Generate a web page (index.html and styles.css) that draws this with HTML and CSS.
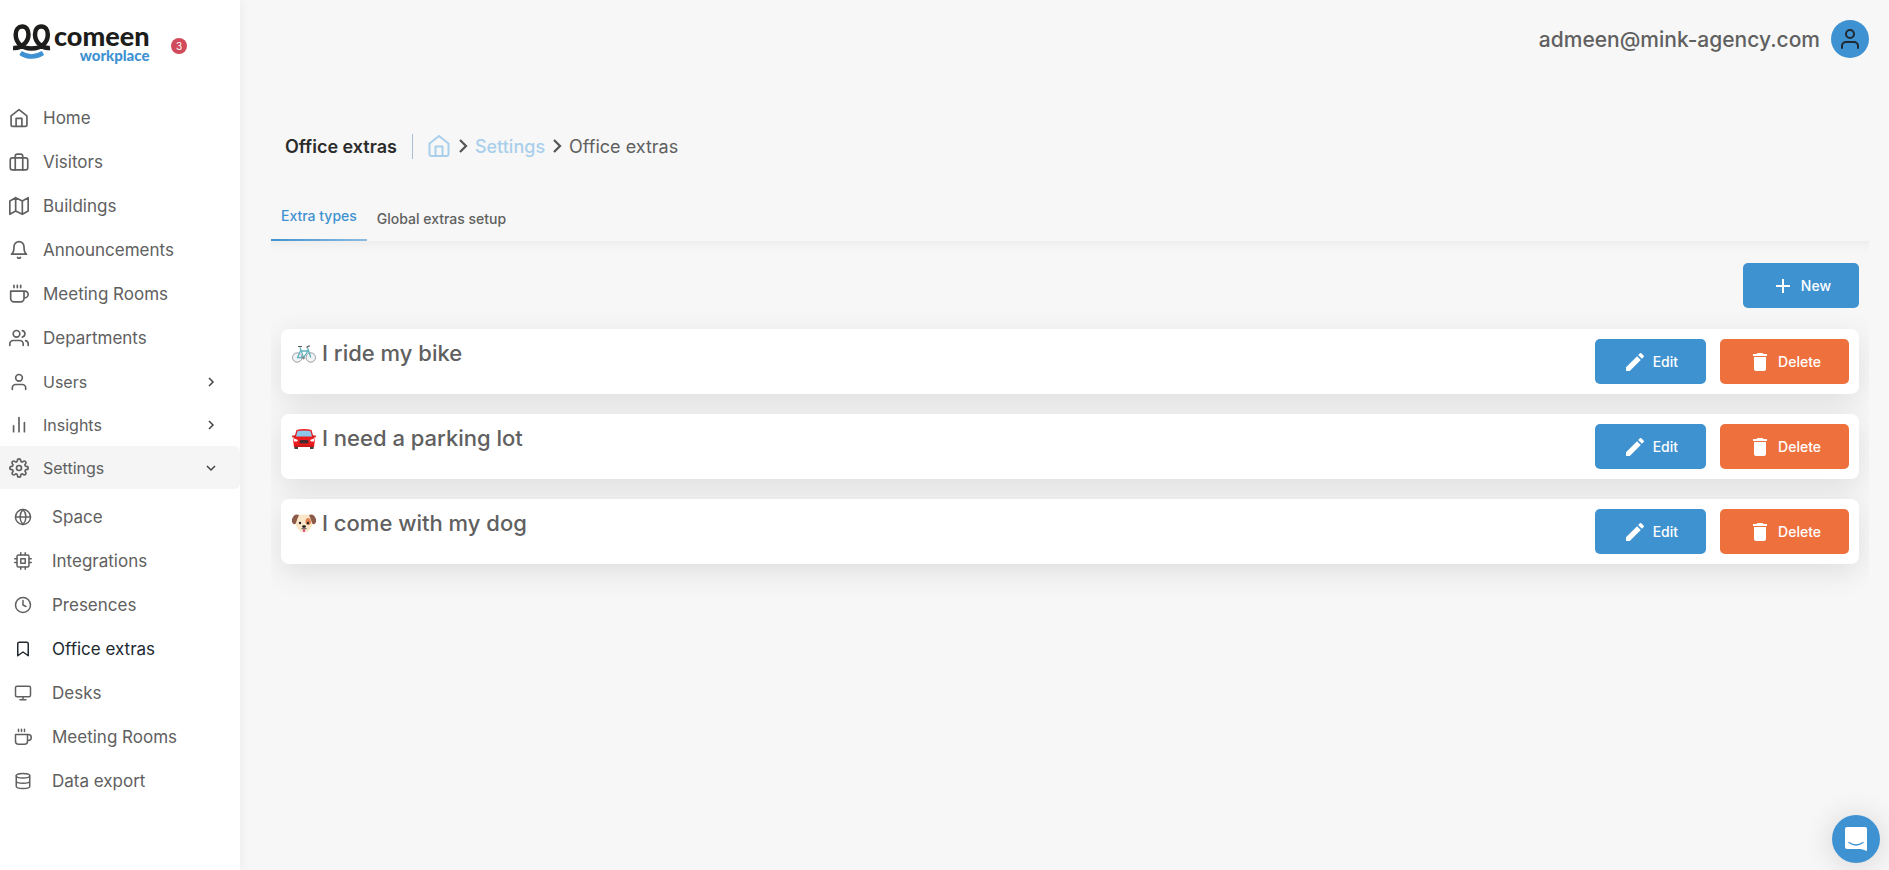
FILE: index.html
```html
<!DOCTYPE html>
<html lang="en">
<head>
<meta charset="utf-8">
<title>Office extras</title>
<link rel="stylesheet" href="styles.css">
</head>
<body>
<svg class="sprite" aria-hidden="true">
  <symbol id="home" viewBox="0 0 24 24"><path d="M2.500 9.500 12 2l9.500 7.500V20a2 2 0 0 1-2 2h-15a2 2 0 0 1-2-2z"/><path d="M8.500 22V12.500h7V22"/></symbol>
  <symbol id="case" viewBox="0 0 24 24"><rect x="1.500" y="7" width="21" height="14.500" rx="2.500"/><path d="M7.500 21.500V5a2.500 2.500 0 0 1 2.500-2.500h4A2.500 2.500 0 0 1 16.500 5v16.500"/></symbol>
  <symbol id="map" viewBox="0 0 24 24"><path d="M1 6v16l7-4 8 4 7-4V2l-7 4-8-4zM8 2v16M16 6v16"/></symbol>
  <symbol id="bell" viewBox="0 0 24 24"><path d="M18 8A6 6 0 0 0 6 8c0 7-3 9-3 9h18s-3-2-3-9M13.700 21a2 2 0 0 1-3.400 0"/></symbol>
  <symbol id="coffee" viewBox="0 0 24 24"><path d="M18 8.500h1a4 4 0 0 1 0 8h-1M2 8.500h16v9a4 4 0 0 1-4 4H6a4 4 0 0 1-4-4zM6 1.500v3M10 1.500v3M14 1.500v3"/></symbol>
  <symbol id="people" viewBox="0 0 24 24"><path d="M17 21v-2a4 4 0 0 0-4-4H5a4 4 0 0 0-4 4v2M23 21v-2a4 4 0 0 0-3-3.900M16 3.100a4 4 0 0 1 0 7.800"/><circle cx="9" cy="7" r="4"/></symbol>
  <symbol id="user" viewBox="0 0 24 24"><path d="M20 21v-2a4 4 0 0 0-4-4H8a4 4 0 0 0-4 4v2"/><circle cx="12" cy="7" r="4"/></symbol>
  <symbol id="bars" viewBox="0 0 24 24"><path d="M18.500 20V9M12 20V3M5.500 20v-7"/></symbol>
  <symbol id="gear" viewBox="0 0 24 24"><circle cx="12" cy="12" r="3"/><path d="M19.400 15a1.650 1.650 0 0 0 .33 1.820l.06.06a2 2 0 1 1-2.830 2.830l-.06-.06a1.650 1.650 0 0 0-2.800 1.170V21a2 2 0 1 1-4 0v-.09a1.650 1.650 0 0 0-2.900-1.180l-.06.06a2 2 0 1 1-2.830-2.830l.06-.06A1.650 1.650 0 0 0 3.090 14H3a2 2 0 1 1 0-4h.09a1.650 1.650 0 0 0 1.180-2.900l-.06-.06a2 2 0 1 1 2.830-2.830l.06.06A1.650 1.650 0 0 0 10 3.090V3a2 2 0 1 1 4 0v.09a1.650 1.650 0 0 0 2.820 1.180l.06-.06a2 2 0 1 1 2.830 2.830l-.06.06A1.650 1.650 0 0 0 20.910 10H21a2 2 0 1 1 0 4h-.09a1.650 1.650 0 0 0-1.510 1z"/></symbol>
  <symbol id="globe" viewBox="0 0 24 24"><circle cx="12" cy="12" r="10"/><path d="M2 12h20M12 2a15.300 15.300 0 0 1 4 10 15.300 15.300 0 0 1-4 10 15.300 15.300 0 0 1-4-10 15.300 15.300 0 0 1 4-10z"/></symbol>
  <symbol id="chip" viewBox="0 0 24 24"><rect x="4" y="4" width="16" height="16" rx="2"/><path d="M9 9h6v6H9zM9 1v3M15 1v3M9 20v3M15 20v3M20 9h3M20 14h3M1 9h3M1 14h3"/></symbol>
  <symbol id="clock" viewBox="0 0 24 24"><circle cx="12" cy="12" r="10"/><path d="M12 6v6l4 2"/></symbol>
  <symbol id="bookmark" viewBox="0 0 24 24"><path d="m19 21-7-5-7 5V5a2 2 0 0 1 2-2h10a2 2 0 0 1 2 2z"/></symbol>
  <symbol id="monitor" viewBox="0 0 24 24"><rect x="2" y="3" width="20" height="14" rx="2"/><path d="M8 21h8M12 17v4"/></symbol>
  <symbol id="data" viewBox="0 0 24 24"><ellipse cx="12" cy="5" rx="9" ry="3"/><path d="M21 12c0 1.660-4 3-9 3s-9-1.340-9-3M3 5v14c0 1.660 4 3 9 3s9-1.340 9-3V5"/></symbol>
  <symbol id="chev" viewBox="0 0 24 24"><path d="m8 4 8 8-8 8"/></symbol>
  <symbol id="pencil" viewBox="0 0 24 24"><path d="M3 17.250V21h3.750L17.810 9.940l-3.750-3.750zM20.710 7.040a1 1 0 0 0 0-1.410l-2.340-2.340a1 1 0 0 0-1.410 0l-1.830 1.830 3.750 3.750z"/></symbol>
  <symbol id="trash" viewBox="0 0 24 24"><path d="M6 19c0 1.100.9 2 2 2h8c1.100 0 2-.9 2-2V7H6zM19 4h-3.500l-1-1h-5l-1 1H5v2h14z"/></symbol>
  <symbol id="plus" viewBox="0 0 24 24"><path d="M19 13h-6v6h-2v-6H5v-2h6V5h2v6h6z"/></symbol>
</svg>
<div class="app">
  <aside class="sidebar">
    <div class="brand">
      <a class="logo" href="#" aria-label="comeen workplace">
        <svg class="logo-mark" viewBox="0 0 38 36" aria-hidden="true">
          <path d="M0 24C8 25 15.500 18 15.500 10.500C15.500 5.500 13 2.500 9.200 2.500S2.700 5.500 2.700 10.500C2.700 18 8 24.500 18.500 24.500S34.800 18 34.800 10.500C34.800 5.500 32.300 2.500 28.300 2.500S22 5.500 22 10.500C22 18 29 25 37 24" fill="none" stroke="#1d1d1b" stroke-width="4.500"/>
          <path d="M7.500 29c7 4.500 15 4.500 22.500 0" fill="none" stroke="#3f92d2" stroke-width="4.500"/>
        </svg>
        <span class="logo-text"><span class="logo-name">comeen</span><span class="logo-sub">workplace</span></span>
      </a>
      <span class="badge">3</span>
    </div>
    <nav class="nav">
      <a class="item" href="#"><svg class="icon"><use href="#home"/></svg>Home</a>
      <a class="item" href="#"><svg class="icon"><use href="#case"/></svg>Visitors</a>
      <a class="item" href="#"><svg class="icon"><use href="#map"/></svg>Buildings</a>
      <a class="item" href="#"><svg class="icon"><use href="#bell"/></svg>Announcements</a>
      <a class="item" href="#"><svg class="icon"><use href="#coffee"/></svg>Meeting Rooms</a>
      <a class="item" href="#"><svg class="icon"><use href="#people"/></svg>Departments</a>
      <button class="item group" type="button"><svg class="icon"><use href="#user"/></svg>Users<svg class="arrow"><use href="#chev"/></svg></button>
      <button class="item group" type="button"><svg class="icon"><use href="#bars"/></svg>Insights<svg class="arrow"><use href="#chev"/></svg></button>
      <button class="item group open" type="button" aria-expanded="true"><svg class="icon"><use href="#gear"/></svg>Settings<svg class="arrow"><use href="#chev"/></svg></button>
      <div class="subnav">
        <a class="item" href="#"><svg class="icon"><use href="#globe"/></svg>Space</a>
        <a class="item" href="#"><svg class="icon"><use href="#chip"/></svg>Integrations</a>
        <a class="item" href="#"><svg class="icon"><use href="#clock"/></svg>Presences</a>
        <a class="item current" href="#" aria-current="page"><svg class="icon"><use href="#bookmark"/></svg>Office extras</a>
        <a class="item" href="#"><svg class="icon"><use href="#monitor"/></svg>Desks</a>
        <a class="item" href="#"><svg class="icon"><use href="#coffee"/></svg>Meeting Rooms</a>
        <a class="item" href="#"><svg class="icon"><use href="#data"/></svg>Data export</a>
      </div>
    </nav>
  </aside>
  <main class="main">
    <header class="topbar">
      <span class="email">admeen@mink-agency.com</span>
      <button class="avatar" type="button" aria-label="Account"><svg class="icon"><use href="#user"/></svg></button>
    </header>
    <div class="crumbs">
      <h1 class="title">Office extras</h1>
      <nav class="trail" aria-label="Breadcrumb">
        <a class="trail-home" href="#" aria-label="Home"><svg class="icon"><use href="#home"/></svg></a>
        <svg class="sep"><use href="#chev"/></svg>
        <a class="trail-link" href="#">Settings</a>
        <svg class="sep"><use href="#chev"/></svg>
        <span>Office extras</span>
      </nav>
    </div>
    <div class="tabs" role="tablist">
      <button class="tab active" type="button" role="tab" aria-selected="true">Extra types</button>
      <button class="tab" type="button" role="tab" aria-selected="false">Global extras setup</button>
    </div>
    <section class="panel">
      <div class="actions"><button class="btn" type="button"><svg class="glyph"><use href="#plus"/></svg>New</button></div>
      <ul class="list">
        <li class="card">
          <h2 class="name"><svg class="emoji" viewBox="0 0 24 20" role="img" aria-label="Bicycle">
            <g fill="#f1f3f4" stroke="#9a9ea1" stroke-width="1"><circle cx="5.200" cy="13.500" r="4.700"/><circle cx="18.800" cy="13.500" r="4.700"/></g>
            <path d="m5.500 13.500 3-6.500h7.500L11.500 13.500zM8 3.500l3.500 10M18.800 13.500l-3.300-10" fill="none" stroke="#62b3c0" stroke-width="1.300"/>
            <path d="M6 2.500h4M14.500 3.500l2-1.500h1.500" fill="none" stroke="#555" stroke-width="1.200"/><circle cx="11.500" cy="14" r="1.400" fill="#888"/>
          </svg>I ride my bike</h2>
          <div class="buttons"><button class="btn" type="button"><svg class="glyph"><use href="#pencil"/></svg>Edit</button><button class="btn danger" type="button"><svg class="glyph"><use href="#trash"/></svg>Delete</button></div>
        </li>
        <li class="card">
          <h2 class="name"><svg class="emoji" viewBox="0 0 24 20" role="img" aria-label="Car">
            <path d="M2 16h4v4H2.500zM18 16h4l-.5 4H18z" fill="#444"/>
            <path d="M4.500 1Q12-.8 19.500 1L21.500 8q1.500 1.500 1.200 5l-.7 5H2l-.7-5q-.3-3.500 1.200-5z" fill="#ec1c1e"/>
            <path d="M0 6.500h3.500v2H.5zM20.500 6.500H24l-.5 2h-3z" fill="#d41416"/>
            <path d="M5.500 2Q12 .8 18.500 2L20 7.500H4z" fill="#8cc7ea"/>
            <rect x="7.500" y="11" width="9" height="3.500" rx="1.500" fill="#49292b"/><path d="M2 9.500 6 11l-1 1.500H2zM22 9.500 18 11l1 1.500h3z" fill="#fff"/><path d="M2 17h20" stroke="#b01315"/>
          </svg>I need a parking lot</h2>
          <div class="buttons"><button class="btn" type="button"><svg class="glyph"><use href="#pencil"/></svg>Edit</button><button class="btn danger" type="button"><svg class="glyph"><use href="#trash"/></svg>Delete</button></div>
        </li>
        <li class="card">
          <h2 class="name"><svg class="emoji" viewBox="0 0 24 20" role="img" aria-label="Dog">
            <path d="M5 1.500Q12-.5 19 1.500l2 7.500q-1.500 6-6 9h-6Q4.500 15 3 9z" fill="#fbe6c8"/>
            <path d="M7 1Q3-.5 1 3T.5 9q2 2.500 3.500 0Q5 5 7 1zM17 1q4-1.500 6 2t.5 6q-2 2.500-3.500 0Q19 5 17 1z" fill="#8b5a48"/>
            <ellipse cx="16.200" cy="7.500" rx="2.700" ry="3.500" fill="#dd8653"/><circle cx="8" cy="9" r="1.200" fill="#222"/><circle cx="16" cy="9" r="1.200" fill="#222"/>
            <ellipse cx="12" cy="12.500" rx="2" ry="1.300" fill="#222"/><path d="M12 13v2M9.500 14.500q2.500 1.500 5 0" fill="none" stroke="#222" stroke-width=".8"/><path d="M10.900 15.500h2.200V17.500q-1.100 1.500-2.200 0z" fill="#f0508a"/>
          </svg>I come with my dog</h2>
          <div class="buttons"><button class="btn" type="button"><svg class="glyph"><use href="#pencil"/></svg>Edit</button><button class="btn danger" type="button"><svg class="glyph"><use href="#trash"/></svg>Delete</button></div>
        </li>
      </ul>
    </section>
  </main>
</div>
<button class="chat" type="button" aria-label="Open chat">
  <svg class="chat-icon" viewBox="0 0 22 24"><path d="M2 0h18a2 2 0 0 1 2 2v22l-6-2H2a2 2 0 0 1-2-2V2a2 2 0 0 1 2-2z" fill="#fff"/><path d="M4 15.500q7 5 14 0" fill="none" stroke="#3f92d2" stroke-width="1.300" stroke-linecap="round"/></svg>
</button>
</body>
</html>
```
FILE: styles.css
```css
* { box-sizing: border-box; }
body { margin: 0; background: #f7f7f7; color: #606060; font-family: Inter, "Open Sans", sans-serif; font-size: 16px; }
a { color: inherit; text-decoration: none; }
button { border: 0; padding: 0; background: none; color: inherit; font: inherit; cursor: pointer; }
.sprite { display: none; }
.app { display: flex; min-height: 100vh; }
.icon { width: 20px; height: 20px; flex: none; fill: none; stroke: currentColor; stroke-width: 2; stroke-linecap: round; stroke-linejoin: round; }

.sidebar { width: 240px; flex: none; background: #fff; box-shadow: 0 0 12px rgba(0, 0, 0, 0.06); }
.brand { display: flex; align-items: center; gap: 20px; height: 96px; padding: 0 0 4px 13px; }
.logo { display: flex; align-items: flex-start; gap: 3px; width: 138px; margin-bottom: 4px; }
.logo-mark { width: 38px; height: 36px; flex: none; }
.logo-text { display: flex; flex-direction: column; align-items: flex-end; padding-top: 2px; font-family: Lato, sans-serif; font-weight: 900; }
.logo-name { color: #1d1d1b; font-size: 27px; line-height: 20px; }
.logo-sub { color: #3f92d2; font-size: 15px; line-height: 18px; }
.badge { display: grid; place-items: center; width: 16px; height: 16px; border-radius: 50%; background: #d14a5b; color: #fff; font-size: 10px; }

.nav { display: flex; flex-direction: column; }
.item { display: flex; align-items: center; gap: 14px; height: 44px; padding-left: 9px; font-size: 17px; }
.group { height: 43px; font-size: 16px; text-align: left; }
.open { border-radius: 0 6px 6px 0; background: #f5f5f5; }
.arrow { width: 12px; height: 12px; margin: 0 23px 0 auto; fill: none; stroke: #444; stroke-width: 3; }
.open .arrow { transform: rotate(90deg); }
.subnav { padding-top: 6px; }
.subnav .item { gap: 20px; padding-left: 14px; }
.subnav .icon { width: 18px; height: 18px; }
.current { color: #212930; }

.main { flex: 1; min-width: 0; padding: 0 20px 0 31px; }
.topbar { display: flex; justify-content: flex-end; align-items: center; gap: 11px; height: 78px; }
.email { font-size: 21px; font-weight: 500; }
.avatar { display: grid; place-items: center; width: 38px; height: 38px; border-radius: 50%; background: #3f92d2; color: #212930; }
.avatar .icon { width: 24px; height: 24px; }
.crumbs { display: flex; align-items: center; height: 70px; margin-top: 33px; padding-left: 14px; }
.title { margin: 0; padding-right: 15px; color: #2b2b2b; font-size: 18px; font-weight: 600; line-height: 25px; border-right: 1px solid #a9bfd3; }
.trail { display: flex; align-items: center; gap: 3px; padding-left: 14px; font-size: 18px; }
.trail-home { display: flex; color: #a9cfeb; }
.trail-home .icon { width: 24px; height: 24px; }
.trail-link { color: #a9cfeb; font-weight: 500; }
.sep { width: 18px; height: 18px; fill: none; stroke: #555; stroke-width: 3; }

.tabs { display: flex; height: 60px; }
.tab { padding: 14px 10px 0; font-size: 14px; font-weight: 500; }
.active { padding-top: 10px; color: #3f92d2; border-bottom: 2px solid #3f92d2; border-image: linear-gradient(90deg, #3f92d2, #8dbce0) 1; }
.panel { padding: 22px 10px 50px; overflow: hidden; box-shadow: inset 0 14px 14px -14px rgba(0, 0, 0, 0.08); }
.actions { display: flex; justify-content: flex-end; margin-bottom: 21px; }
.btn { display: flex; align-items: center; gap: 6px; height: 45px; padding: 0 28px; border-radius: 5px; background: #3f92d0; color: #fff; font-size: 14px; font-weight: 500; }
.danger { background: #ee703d; }
.glyph { width: 24px; height: 24px; fill: currentColor; }
.list { display: flex; flex-direction: column; gap: 20px; margin: 0; padding: 0; list-style: none; }
.card { display: flex; justify-content: space-between; padding: 10px; border-radius: 8px; background: #fff; box-shadow: 0 8px 30px rgba(0, 0, 0, 0.1); }
.name { display: flex; gap: 6px; margin: 0; padding-left: 1px; font-size: 22px; font-weight: 500; line-height: 28px; }
.emoji { width: 24px; height: 20px; margin-top: 5px; }
.buttons { display: flex; gap: 14px; }

.chat { position: fixed; right: 9px; bottom: 7px; display: grid; place-items: center; width: 48px; height: 48px; border-radius: 50%; background: #3f92d2; box-shadow: 0 2px 30px rgba(0, 0, 0, 0.15); }
.chat-icon { width: 22px; height: 24px; }
```
